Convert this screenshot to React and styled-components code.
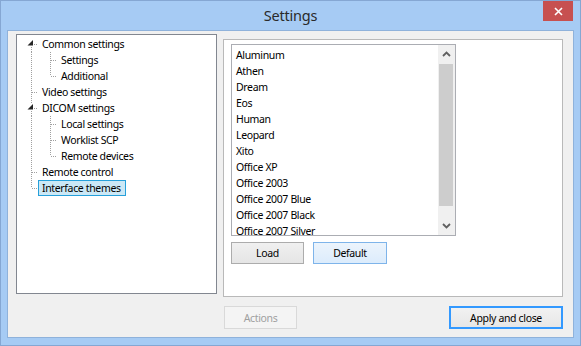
import React from "react";
import styled, { createGlobalStyle } from "styled-components";

const GlobalStyle = createGlobalStyle`
  html, body {
    margin: 0;
    padding: 0;
    background: #a6cbf4;
  }
  * {
    box-sizing: border-box;
  }
`;

const Window = styled.div`
  width: 581px;
  height: 346px;
  display: flex;
  flex-direction: column;
  background: #a6cbf4;
  border: 1px solid #85a7d3;
  font-family: "Noto Sans", "Open Sans", sans-serif;
  font-size: 10.5px;
  letter-spacing: -0.35px;
  color: #000;
`;

const TitleBar = styled.div`
  height: 29px;
  display: grid;
  grid-template-columns: 1fr auto 1fr;
`;

const Title = styled.div`
  grid-column: 2;
  align-self: center;
  font-size: 14.5px;
  letter-spacing: -0.2px;
  color: #2a2a2a;
  margin-top: -1px;
`;

const CloseButton = styled.div`
  grid-column: 3;
  justify-self: end;
  align-self: start;
  width: 30px;
  height: 20px;
  margin-right: 7px;
  background: #c75050;
  display: flex;
  align-items: center;
  justify-content: center;
`;

const Client = styled.div`
  flex: 1;
  margin: 0 6px 7px 6px;
  background: #f0f0f0;
  border: 1px solid #8fb2db;
  display: grid;
  grid-template-columns: 201px 340px;
  column-gap: 6px;
  padding: 3px 0 0 8px;
  align-items: start;
`;

const Tree = styled.div`
  height: 260px;
  background: #fff;
  border: 1px solid #828790;
  padding: 1px 0 0 2px;
`;

const TreeRow = styled.div`
  display: flex;
  height: 16px;
  align-items: center;
`;

const TreeLabel = styled.span`
  height: 16px;
  line-height: 14px;
  padding: 0 4px 0 3px;
  border: 1px solid ${(p) => (p.$selected ? "#26a0da" : "transparent")};
  background: ${(p) => (p.$selected ? "#cbe8f6" : "transparent")};
  white-space: nowrap;
`;

const RightColumn = styled.div`
  margin-top: 5px;
  display: flex;
  flex-direction: column;
`;

const Panel = styled.div`
  height: 258px;
  border: 1px solid #b9b9b9;
  background: #fff;
  padding: 4px 7px;
`;

const ListBox = styled.div`
  width: 225px;
  height: 192px;
  border: 1px solid #abadb3;
  display: flex;
  overflow: hidden;
`;

const Items = styled.div`
  flex: 1;
  padding: 2px 0 0 4px;
  overflow: hidden;
`;

const Item = styled.div`
  height: 16px;
  line-height: 16px;
  white-space: nowrap;
`;

const ScrollBar = styled.div`
  width: 17px;
  background: #f0f0f0;
  display: flex;
  flex-direction: column;
`;

const ScrollArrow = styled.div`
  height: 18px;
  display: flex;
  align-items: center;
  justify-content: center;
`;

const ScrollTrack = styled.div`
  flex: 1;
  padding: 1px 1px 11px 1px;
  display: flex;
`;

const ScrollThumb = styled.div`
  flex: 1;
  background: #cdcdcd;
  margin-right: 1px;
`;

const PanelButtons = styled.div`
  display: flex;
  gap: 9px;
  margin-top: 6px;
`;

const Button = styled.div`
  width: ${(p) => p.$width}px;
  height: ${(p) => p.$height || 22}px;
  display: flex;
  align-items: center;
  justify-content: center;
  border: 1px solid #acacac;
  background: linear-gradient(#f0f0f0, #e5e5e5);
  color: #000;
  white-space: nowrap;

  ${(p) =>
    p.$hover &&
    `
    border-color: #7eb4ea;
    background: linear-gradient(#ecf4fc, #dcecfc);
  `}

  ${(p) =>
    p.$focused &&
    `
    border-color: #3399ff;
    box-shadow: inset 0 0 0 1px #3399ff;
    background: linear-gradient(#f2f2f2, #e6e6e6);
  `}

  ${(p) =>
    p.$disabled &&
    `
    border-color: #d9d9d9;
    background: #f4f4f4;
    color: #a0a0a0;
  `}
`;

const Footer = styled.div`
  display: flex;
  justify-content: space-between;
  margin-top: 9px;
  padding-left: 1px;
`;

const treeItems = [
  { label: "Common settings", level: 0, toggle: true, pos: "first" },
  { label: "Settings", level: 1, pos: "mid" },
  { label: "Additional", level: 1, pos: "last" },
  { label: "Video settings", level: 0, pos: "mid" },
  { label: "DICOM settings", level: 0, toggle: true, pos: "mid" },
  { label: "Local settings", level: 1, pos: "mid" },
  { label: "Worklist SCP", level: 1, pos: "mid" },
  { label: "Remote devices", level: 1, pos: "last" },
  { label: "Remote control", level: 0, pos: "mid" },
  { label: "Interface themes", level: 0, pos: "last", selected: true },
];

const themes = [
  "Aluminum",
  "Athen",
  "Dream",
  "Eos",
  "Human",
  "Leopard",
  "Xito",
  "Office XP",
  "Office 2003",
  "Office 2007 Blue",
  "Office 2007 Black",
  "Office 2007 Silver",
];

const dot = { stroke: "#a0a0a0", strokeWidth: 1, strokeDasharray: "1 1" };

// one 19x16 cell of tree connector lines
const Gutter = ({ kind, toggle }) => {
  const top = kind === "first" ? 8 : 0;
  const bottom = kind === "last" ? 8 : 16;
  return (
    <svg width="19" height="16" viewBox="0 0 19 16" style={{ flex: "none" }}>
      {kind !== "blank" &&
        (toggle ? (
          <>
            {kind !== "first" && <line x1="12.5" y1="0" x2="12.5" y2="4" {...dot} />}
            <line x1="12.5" y1="11" x2="12.5" y2="16" {...dot} />
          </>
        ) : (
          <line x1="12.5" y1={top} x2="12.5" y2={bottom} {...dot} />
        ))}
      {kind !== "pipe" && kind !== "blank" && (
        <line x1={toggle ? 15 : 13} y1="8.5" x2="19" y2="8.5" {...dot} />
      )}
      {toggle && <polygon points="14,4 14,9.5 8.5,9.5" fill="#262626" />}
    </svg>
  );
};

const Chevron = ({ up }) => (
  <svg width="9" height="6" viewBox="0 0 9 6">
    <path
      d={up ? "M1 5 L4.5 1.5 L8 5" : "M1 1 L4.5 4.5 L8 1"}
      fill="none"
      stroke="#606060"
      strokeWidth="1.8"
    />
  </svg>
);

export default function App() {
  return (
    <>
      <GlobalStyle />
      <Window>
        <TitleBar>
          <Title>Settings</Title>
          <CloseButton>
            <svg width="9" height="9" viewBox="0 0 9 9">
              <path d="M1 1 L8 8 M8 1 L1 8" stroke="#fff" strokeWidth="1.6" />
            </svg>
          </CloseButton>
        </TitleBar>
        <Client>
          <Tree>
            {treeItems.map((item) => (
              <TreeRow key={item.label}>
                {item.level === 0 ? (
                  <Gutter kind={item.pos} toggle={item.toggle} />
                ) : (
                  <>
                    <Gutter kind="pipe" />
                    <Gutter kind={item.pos} />
                  </>
                )}
                <TreeLabel $selected={item.selected}>{item.label}</TreeLabel>
              </TreeRow>
            ))}
          </Tree>
          <RightColumn>
            <Panel>
              <ListBox>
                <Items>
                  {themes.map((t) => (
                    <Item key={t}>{t}</Item>
                  ))}
                </Items>
                <ScrollBar>
                  <ScrollArrow>
                    <Chevron up />
                  </ScrollArrow>
                  <ScrollTrack>
                    <ScrollThumb />
                  </ScrollTrack>
                  <ScrollArrow>
                    <Chevron />
                  </ScrollArrow>
                </ScrollBar>
              </ListBox>
              <PanelButtons>
                <Button $width={73}>Load</Button>
                <Button $width={74} $hover>
                  Default
                </Button>
              </PanelButtons>
            </Panel>
            <Footer>
              <Button $width={73} $height={23} $disabled>
                Actions
              </Button>
              <Button $width={114} $height={23} $focused>
                Apply and close
              </Button>
            </Footer>
          </RightColumn>
        </Client>
      </Window>
    </>
  );
}
